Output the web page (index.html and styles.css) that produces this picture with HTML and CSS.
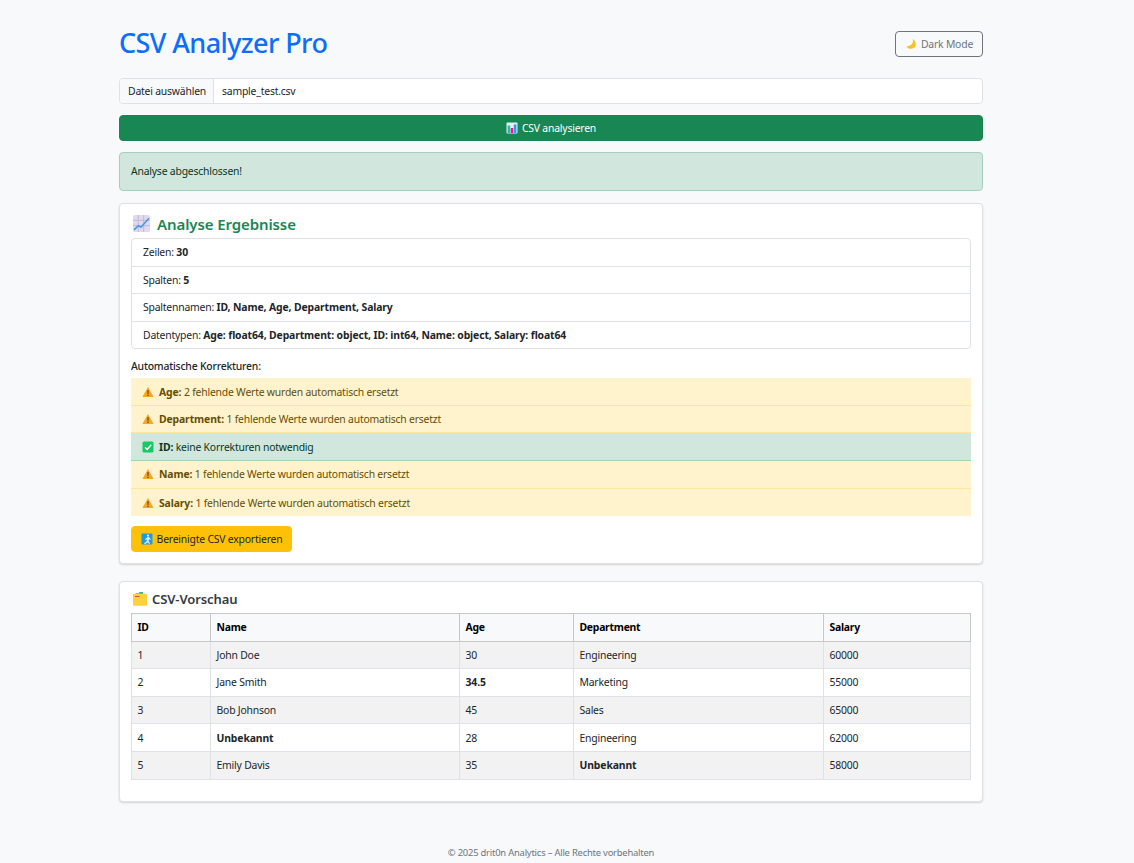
FILE: index.html
```html
<!DOCTYPE html>
<html lang="de">
<head>
    <meta charset="UTF-8">
    <title>CSV Analyzer Pro</title>
    <link rel="stylesheet" href="styles.css">
</head>
<body>
    <svg class="icon-defs" width="0" height="0" aria-hidden="true">
        <symbol id="i-warn" viewBox="0 0 12 12">
            <path d="M6 1 11.6 11H.4Z" fill="#f5a623"/>
            <path d="M5.4 4.2h1.2L6.4 8h-.8Z" fill="#40301a"/>
            <circle cx="6" cy="9.3" r=".7" fill="#40301a"/>
        </symbol>
    </svg>

    <main class="container">
        <header class="top">
            <h1>CSV Analyzer Pro</h1>
            <button class="btn-dark-mode">
                <svg class="icon" viewBox="0 0 12 12"><path d="M7.6 1C8.6 4 8 7.6 1.4 8.4 3 11 7 11.6 9.4 9.6 11.8 7.4 11 2.8 7.6 1Z" fill="#fcc21b"/></svg>
                Dark Mode
            </button>
        </header>

        <div class="file-input">
            <span class="file-btn">Datei auswählen</span>
            <span class="file-name">sample_test.csv</span>
        </div>

        <button class="btn-analyze">
            <svg class="icon" viewBox="0 0 12 12">
                <rect x=".5" y=".5" width="11" height="11" rx="1" fill="#e6eef2"/>
                <rect x="1.6" y="3.5" width="2.6" height="7.5" fill="#17c3a5"/>
                <rect x="4.7" y="6" width="2.6" height="5" fill="#e8178a"/>
                <rect x="7.8" y="2.5" width="2.6" height="8.5" fill="#2a9fe0"/>
            </svg>
            CSV analysieren
        </button>

        <div class="alert-done">Analyse abgeschlossen!</div>

        <section class="card card-results">
            <h2 class="title-results">
                <svg class="icon-lg" viewBox="0 0 16 16">
                    <rect width="16" height="16" rx="1.5" fill="#e2d9ee"/>
                    <path d="M0 5h16M0 10h16M5 0v16M10 0v16" stroke="#b9aed0" stroke-width=".7"/>
                    <path d="M1 14 5 10l2.5 1.5L15 3" fill="none" stroke="#3b9be8" stroke-width="1.4"/>
                </svg>
                Analyse Ergebnisse
            </h2>
            <ul class="info-list">
                <li>Zeilen: <b>30</b></li>
                <li>Spalten: <b>5</b></li>
                <li>Spaltennamen: <b>ID, Name, Age, Department, Salary</b></li>
                <li>Datentypen: <b>Age: float64, Department: object, ID: int64, Name: object, Salary: float64</b></li>
            </ul>
            <p class="fix-title">Automatische Korrekturen:</p>
            <ul class="fix-list">
                <li class="warn"><svg class="icon"><use href="#i-warn"/></svg><span><b>Age:</b> 2 fehlende Werte wurden automatisch ersetzt</span></li>
                <li class="warn"><svg class="icon"><use href="#i-warn"/></svg><span><b>Department:</b> 1 fehlende Werte wurden automatisch ersetzt</span></li>
                <li class="ok">
                    <svg class="icon" viewBox="0 0 12 12"><rect x=".5" y=".5" width="11" height="11" rx="1.5" fill="#16c964"/><path d="M3 6.2 5.2 8.4 9.2 3.8" fill="none" stroke="#fff" stroke-width="1.4"/></svg>
                    <span><b>ID:</b> keine Korrekturen notwendig</span>
                </li>
                <li class="warn"><svg class="icon"><use href="#i-warn"/></svg><span><b>Name:</b> 1 fehlende Werte wurden automatisch ersetzt</span></li>
                <li class="warn"><svg class="icon"><use href="#i-warn"/></svg><span><b>Salary:</b> 1 fehlende Werte wurden automatisch ersetzt</span></li>
            </ul>
            <button class="btn-export">
                <svg class="icon" viewBox="0 0 12 12">
                    <rect x=".5" y=".5" width="11" height="11" rx="1" fill="#1f9be6"/>
                    <circle cx="7" cy="2.6" r="1.1" fill="#d8f0ff"/>
                    <path d="M6.6 4 4 6.2l1 .8 1.2-1-.6 2.2L3 10.6l.8.6 2.8-1.8L8.2 11l.8-.5-1.4-2.6.5-2 1 1 .8-.5L8 4Z" fill="#d8f0ff"/>
                </svg>
                Bereinigte CSV exportieren
            </button>
        </section>

        <section class="card card-preview">
            <h3 class="title-preview">
                <svg class="icon-folder" viewBox="0 0 14 14">
                    <rect x="6" y="0" width="4" height="2" fill="#2cc08f"/>
                    <rect x="2.5" y="1" width="4" height="2" fill="#f0a030"/>
                    <path d="M.8 1.800h12.400a.8.8 0 0 1 .8.8v10.400a.8.8 0 0 1-.8.8H.8a.8.8 0 0 1-.8-.8V2.600a.8.8 0 0 1 .8-.8Z" fill="#fbd13d"/>
                    <rect x="2" y="4" width="4.500" height="1" fill="#e8433a"/>
                </svg>
                CSV-Vorschau
            </h3>
            <table class="preview">
                <colgroup>
                    <col class="col-id"><col class="col-name"><col class="col-age"><col class="col-dep"><col>
                </colgroup>
                <thead>
                    <tr><th>ID</th><th>Name</th><th>Age</th><th>Department</th><th>Salary</th></tr>
                </thead>
                <tbody>
                    <tr><td>1</td><td>John Doe</td><td>30</td><td>Engineering</td><td>60000</td></tr>
                    <tr><td>2</td><td>Jane Smith</td><td><b>34.5</b></td><td>Marketing</td><td>55000</td></tr>
                    <tr><td>3</td><td>Bob Johnson</td><td>45</td><td>Sales</td><td>65000</td></tr>
                    <tr><td>4</td><td><b>Unbekannt</b></td><td>28</td><td>Engineering</td><td>62000</td></tr>
                    <tr><td>5</td><td>Emily Davis</td><td>35</td><td><b>Unbekannt</b></td><td>58000</td></tr>
                </tbody>
            </table>
        </section>

        <footer class="foot">© 2025 drit0n Analytics – Alle Rechte vorbehalten</footer>
    </main>
</body>
</html>
```

FILE: styles.css
```css
* {
    box-sizing: border-box;
}

html, body {
    margin: 0;
    padding: 0;
}

body {
    font-family: "Noto Sans", "Open Sans", sans-serif;
    font-size: 10.4px;
    letter-spacing: -0.2px;
    line-height: 16px;
    color: #212529;
    background-color: #f8f9fa;
    padding-right: 32px;
}

b {
    letter-spacing: -0.12px;
}

.icon-defs {
    position: absolute;
}

.container {
    width: 864px;
    margin: 0 auto;
    padding-top: 24px;
}

.icon {
    width: 12px;
    height: 12px;
    flex: none;
}

.icon-lg {
    width: 17px;
    height: 17px;
    flex: none;
}

.icon-folder {
    width: 14px;
    height: 14px;
    flex: none;
}

.top {
    display: flex;
    justify-content: space-between;
    align-items: center;
    height: 40px;
    margin-bottom: 14px;
}

h1 {
    margin: 0;
    padding-bottom: 2px;
    font-size: 27px;
    line-height: 38px;
    font-weight: 500;
    letter-spacing: -0.6px;
    color: #0d6efd;
}

button {
    display: flex;
    align-items: center;
    justify-content: center;
    gap: 4px;
    height: 26px;
    padding: 0;
    font-family: inherit;
    font-size: inherit;
    letter-spacing: inherit;
    line-height: 16px;
    border-radius: 4px;
    cursor: pointer;
}

.btn-dark-mode {
    width: 88px;
    color: #6c757d;
    background: transparent;
    border: 1px solid #6c757d;
}

.file-input {
    display: flex;
    height: 26px;
    margin-bottom: 11px;
    background: #fff;
    border: 1px solid #dee2e6;
    border-radius: 4px;
    overflow: hidden;
}

.file-btn {
    flex: none;
    width: 94px;
    padding: 4px 0 4px 8px;
    white-space: nowrap;
    background: #f8f9fa;
    border-right: 1px solid #dee2e6;
}

.file-name {
    padding: 4px 8px;
}

.btn-analyze {
    width: 100%;
    margin-bottom: 11px;
    color: #fff;
    background: #198754;
    border: 1px solid #198754;
}

.alert-done {
    height: 39px;
    padding: 10px 11px;
    margin-bottom: 12px;
    color: #0a3622;
    background: #d1e7dd;
    border: 1px solid #a3cfbb;
    border-radius: 4px;
}

.card {
    padding: 8px 11px 11px;
    margin-bottom: 17px;
    background: #fff;
    border: 1px solid #dee2e6;
    border-radius: 4px;
    box-shadow: 0 1px 2px rgba(0, 0, 0, 0.15);
}

.card-results {
    height: 361px;
}

.card-preview {
    height: 221px;
}

.title-results {
    display: flex;
    align-items: center;
    gap: 7px;
    height: 23px;
    margin: 0 0 3px 2px;
    font-size: 15px;
    font-weight: 600;
    letter-spacing: -0.1px;
    color: #198754;
}

.title-preview {
    display: flex;
    align-items: center;
    gap: 5px;
    height: 18px;
    margin: 0 0 5px 2px;
    font-size: 13px;
    font-weight: 600;
    letter-spacing: -0.1px;
    color: #343a40;
}

ul {
    list-style: none;
    margin: 0;
    padding: 0;
}

.info-list {
    border: 1px solid #dee2e6;
    border-radius: 4px;
}

.info-list li {
    height: 27.6px;
    padding: 5.2px 11px;
    border-bottom: 1px solid #dee2e6;
}

.info-list li:last-child {
    height: 26.4px;
    border-bottom: 0;
}

.fix-title {
    margin: 9px 0 4px;
    font-weight: 500;
}

.fix-list li {
    display: flex;
    align-items: center;
    gap: 5px;
    height: 27.6px;
    padding: 0.4px 11px 0;
    border-bottom: 1px solid transparent;
}

.fix-list li:last-child {
    border-bottom: 0;
}

.fix-list .warn {
    color: #664d03;
    background: #fff3cd;
    border-color: #ffe69c;
}

.fix-list .ok {
    color: #0a3622;
    background: #d1e7dd;
    border-color: #a3cfbb;
}

.btn-export {
    width: 161px;
    margin-top: 10px;
    color: #212529;
    background: #ffc107;
    border: 1px solid #ffc107;
}

.preview {
    width: 840px;
    table-layout: fixed;
    border-collapse: collapse;
}

.col-id { width: 79px; }
.col-name { width: 249px; }
.col-age { width: 114px; }
.col-dep { width: 250px; }

.preview th,
.preview td {
    height: 27.6px;
    padding: 0 5.5px;
    text-align: left;
    border: 1px solid #dee2e6;
}

.preview th {
    color: #000;
    font-weight: 700;
    letter-spacing: -0.25px;
    background: #f8f9fa;
    border-color: #c6c7c8;
}

.preview tbody tr:nth-child(odd) td {
    background: #f2f2f2;
}

.foot {
    margin-top: 44px;
    text-align: center;
    color: #6c757d;
    font-size: 9.4px;
    line-height: 14px;
}
```
